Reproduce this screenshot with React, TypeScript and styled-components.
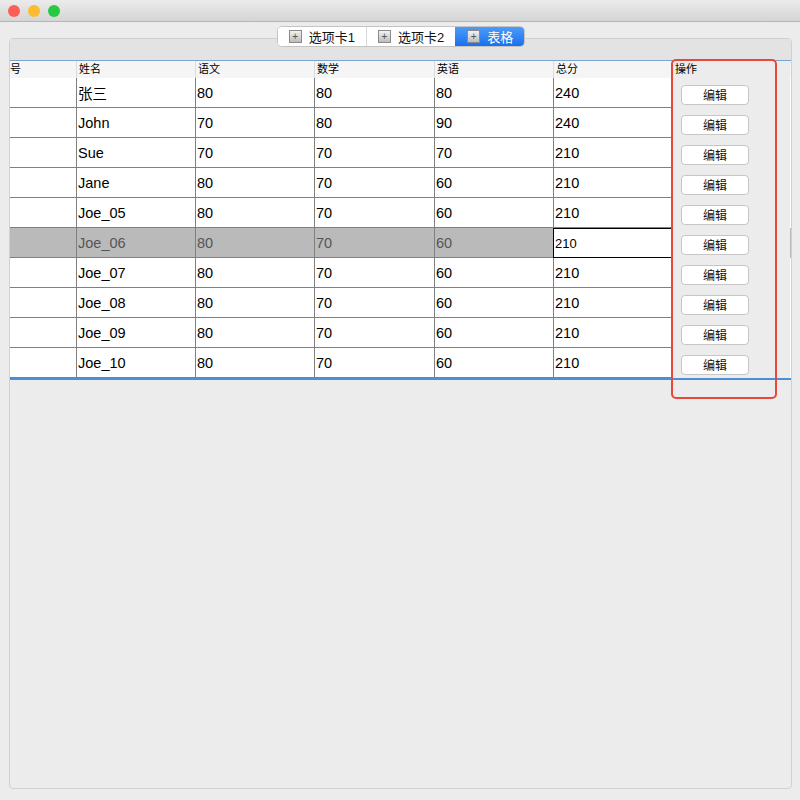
import React from "react";
import styled, { createGlobalStyle } from "styled-components";

const Global = createGlobalStyle`
  html, body { margin: 0; padding: 0; background: #ececec; }
  body { font-family: "Liberation Sans", "Noto Sans CJK SC", sans-serif; }
`;

const Window = styled.div`
  width: 800px;
  height: 800px;
  display: flex;
  flex-direction: column;
  background: #ececec;
  overflow: hidden;
`;

const TitleBar = styled.div`
  height: 21px;
  flex: none;
  display: flex;
  align-items: center;
  gap: 8px;
  padding-left: 8px;
  background: linear-gradient(#ebebeb, #d5d5d5);
  border-bottom: 1px solid #b5b5b5;
`;

const Light = styled.span<{ $c: string }>`
  width: 12px;
  height: 12px;
  border-radius: 50%;
  background: ${(p) => p.$c};
`;

const Body = styled.div`
  flex: 1;
  display: flex;
  flex-direction: column;
  padding: 4px 8px 11px 9px;
`;

const TabBar = styled.div`
  align-self: center;
  display: flex;
  position: relative;
  z-index: 1;
  margin-left: 1px;
  border: 1px solid #c4c4c4;
  border-radius: 5px;
  background: #fff;
  overflow: hidden;
`;

const Tab = styled.div<{ $active?: boolean }>`
  height: 19px;
  padding: 0 11px 0 11px;
  display: flex;
  align-items: center;
  gap: 7px;
  font-size: 13px;
  color: ${(p) => (p.$active ? "#fff" : "#111")};
  background: ${(p) => (p.$active ? "linear-gradient(#4d9cf8, #1a6ff0)" : "#fff")};
  border-left: 1px solid ${(p) => (p.$active ? "transparent" : "#d8d8d8")};
  &:first-child { border-left: none; }
`;

const TabIcon = styled.span`
  width: 11px;
  height: 11px;
  border: 1px solid #8a8a8a;
  background: linear-gradient(#f2f2f2, #bdbdbd);
  display: flex;
  align-items: center;
  justify-content: center;
  font-size: 10px;
  line-height: 1;
  color: #555;
`;

const Panel = styled.div`
  flex: 1;
  margin-top: -9px;
  border: 1px solid #d0d0d0;
  border-radius: 4px;
  background: #ececec;
  display: flex;
  flex-direction: column;
  position: relative;
`;

const PanelHead = styled.div`
  height: 21px;
  background: #e3e3e3;
  border-bottom: 1px solid #7aa6d2;
`;

const cols = "66px 119px 119px 120px 119px 119px 118px";

const HeaderRow = styled.div`
  display: grid;
  grid-template-columns: ${cols};
  height: 17px;
  background: #f5f5f5;
  font-size: 11px;
`;

const HeadCell = styled.div<{ $plain?: boolean }>`
  padding-left: 2px;
  line-height: 16px;
  border-left: 1px solid #dcdcdc;
  background: ${(p) => (p.$plain ? "#ececec" : "transparent")};
  &:first-child { border-left: none; padding-left: 0; }
`;

const Row = styled.div<{ $sel?: boolean }>`
  display: grid;
  grid-template-columns: ${cols};
  height: 30px;
  background: ${(p) => (p.$sel ? "#bababa" : "#fff")};
  color: ${(p) => (p.$sel ? "#555" : "#000")};
  font-size: 14.5px;
`;

const Cell = styled.div<{ $focus?: boolean }>`
  display: flex;
  align-items: center;
  padding-left: 1px;
  border-left: 1px solid #808080;
  border-bottom: 1px solid #808080;
  ${(p) =>
    p.$focus &&
    `background:#fff;color:#000;border:1px solid #000;font-size:13px;`}
  &:first-child { border-left: none; }
`;

const ActionCell = styled.div`
  background: #ececec;
  display: flex;
  align-items: center;
  justify-content: center;
  padding-right: 32px;
  padding-top: 3px;
`;

const EditButton = styled.button`
  width: 68px;
  height: 20px;
  border: 1px solid #c6c6c6;
  border-radius: 4px;
  background: #fff;
  font-family: "Noto Sans CJK SC", sans-serif;
  font-size: 12px;
  color: #111;
  padding: 0;
`;

const TableBottom = styled.div`
  height: 2px;
  background: #4a90d9;
`;

const Highlight = styled.div`
  position: absolute;
  left: 661px;
  top: 20px;
  width: 102px;
  height: 336px;
  border: 2px solid #e8483a;
  border-radius: 5px;
  pointer-events: none;
`;

const rows = [
  ["张三", "80", "80", "80", "240"],
  ["John", "70", "80", "90", "240"],
  ["Sue", "70", "70", "70", "210"],
  ["Jane", "80", "70", "60", "210"],
  ["Joe_05", "80", "70", "60", "210"],
  ["Joe_06", "80", "70", "60", "210"],
  ["Joe_07", "80", "70", "60", "210"],
  ["Joe_08", "80", "70", "60", "210"],
  ["Joe_09", "80", "70", "60", "210"],
  ["Joe_10", "80", "70", "60", "210"],
];

const App = () => (
  <Window>
    <Global />
    <TitleBar>
      <Light $c="#fc5f57" />
      <Light $c="#fdbc2e" />
      <Light $c="#28c840" />
    </TitleBar>
    <Body>
      <TabBar>
        <Tab><TabIcon>+</TabIcon>选项卡1</Tab>
        <Tab><TabIcon>+</TabIcon>选项卡2</Tab>
        <Tab $active><TabIcon>+</TabIcon>表格</Tab>
      </TabBar>
      <Panel>
        <PanelHead />
        <HeaderRow>
          {["号", "姓名", "语文", "数学", "英语", "总分"].map((h) => (
            <HeadCell key={h}>{h}</HeadCell>
          ))}
          <HeadCell $plain>操作</HeadCell>
        </HeaderRow>
        {rows.map((r, i) => (
          <Row key={r[0]} $sel={i === 5}>
            <Cell />
            {r.map((v, j) => (
              <Cell key={j} $focus={i === 5 && j === 4}>{v}</Cell>
            ))}
            <ActionCell>
              <EditButton>编辑</EditButton>
            </ActionCell>
          </Row>
        ))}
        <TableBottom />
        <Highlight />
      </Panel>
    </Body>
  </Window>
);

export default App;
